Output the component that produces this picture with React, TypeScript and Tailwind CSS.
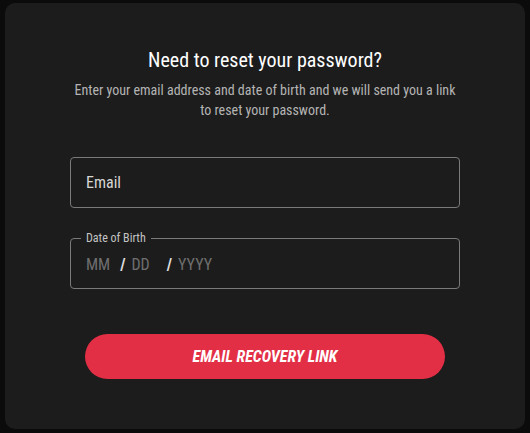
export default function App() {
  return (
    <div
      className="w-[530px] h-[433px] bg-[#0b0b0b] pt-[3px] pl-[5px]"
      style={{ fontFamily: '"Roboto Condensed", Roboto, "Liberation Sans", sans-serif' }}
    >
      <div className="w-[520px] h-[426px] bg-[#1c1c1c] rounded-[10px] flex flex-col items-center">
        {/* ヘッダー */}
        <h1 className="mt-[44px] text-[20px] leading-[26px] text-white [font-stretch:condensed]">
          Need to reset your password?
        </h1>
        <p className="mt-[7px] w-[388px] text-center text-[14px] leading-[20px] text-[#b4b4b4] [font-stretch:condensed]">
          Enter your email address and date of birth and we will send you a link to reset your password.
        </p>

        {/* 入力欄 */}
        <div className="mt-[37px] w-[390px] h-[51px] border border-[#7a7a7a] rounded-[4px] flex items-center px-[15px]">
          <span className="text-[16px] text-[#d6d6d6] [font-stretch:condensed]">Email</span>
        </div>

        <fieldset className="mt-[24px] w-[390px] h-[57px] border border-[#7a7a7a] rounded-[4px] px-[10px]">
          <legend className="px-[5px] text-[12px] leading-[12px] text-[#c4c4c4] [font-stretch:condensed]">
            Date of Birth
          </legend>
          <div className="flex items-center pl-[5px] mt-[9px] text-[16px] text-[#6f6f6f] [font-stretch:condensed]">
            <span>MM</span>
            <span className="ml-[10px] text-[#e0e0e0] font-bold">/</span>
            <span className="ml-[6px]">DD</span>
            <span className="ml-[17px] text-[#e0e0e0] font-bold">/</span>
            <span className="ml-[6px]">YYYY</span>
          </div>
        </fieldset>

        {/* ボタン */}
        <button className="mt-[45px] w-[360px] h-[45px] rounded-full bg-[#e32f45] text-white text-[16px] font-bold italic [font-stretch:condensed]">
          EMAIL RECOVERY LINK
        </button>
      </div>
    </div>
  );
}
